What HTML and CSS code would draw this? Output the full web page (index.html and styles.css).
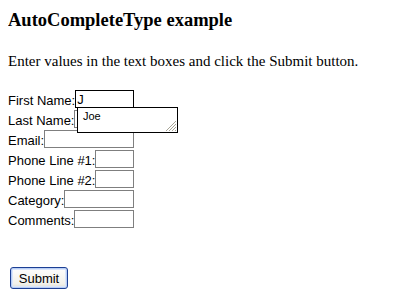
FILE: index.html
```html
<!DOCTYPE html>
<html lang="en">
<head>
    <meta charset="UTF-8">
    <title>AutoCompleteType example</title>
    <link rel="stylesheet" href="styles.css">
</head>
<body>
    <h3>AutoCompleteType example</h3>

    <p>Enter values in the text boxes and click the Submit button.</p>

    <form class="entry-form" onsubmit="return false;">
        <div class="row">
            <label for="firstName">First Name:</label>
            <input type="text" id="firstName" class="focused" value="J">
            <div class="suggest">
                <div class="suggest-item">Joe</div>
                <svg class="grip" width="12" height="12" viewBox="0 0 12 12">
                    <path d="M11 1 L1 11 M11 4 L4 11 M11 7 L7 11 M11 10 L10 11" stroke="#a8a597" stroke-width="1"/>
                    <path d="M12 2 L2 12 M12 5 L5 12 M12 8 L8 12" stroke="#ffffff" stroke-width="1"/>
                </svg>
            </div>
        </div>
        <div class="row">
            <label for="lastName">Last Name:</label>
            <input type="text" id="lastName">
        </div>
        <div class="row">
            <label for="email">Email:</label>
            <input type="text" id="email">
        </div>
        <div class="row">
            <label for="phone1">Phone Line #1:</label>
            <input type="text" id="phone1">
        </div>
        <div class="row">
            <label for="phone2">Phone Line #2:</label>
            <input type="text" id="phone2">
        </div>
        <div class="row">
            <label for="category">Category:</label>
            <input type="text" id="category">
        </div>
        <div class="row">
            <label for="comments">Comments:</label>
            <input type="text" id="comments">
        </div>

        <button type="submit" class="submit-btn">Submit</button>
    </form>
</body>
</html>
```

FILE: styles.css
```css
body {
    margin: 8px;
    background: white;
    color: black;
    font-family: "Liberation Serif", "Times New Roman", serif;
    font-size: 15px;
}
h3 {
    font-size: 18.5px;
    font-weight: bold;
    margin: 2px 0 0;
}
p {
    margin: 22px 0 0;
}
.entry-form {
    font-family: "Liberation Sans", Arial, sans-serif;
    font-size: 13px;
    padding-top: 19px;
}
.row {
    position: relative;
    display: flex;
    align-items: flex-end;
    width: 126px;
    height: 20px;
}
.row:first-child {
    z-index: 2;
}
.row label {
    line-height: 16px;
    white-space: nowrap;
}
.row input {
    flex: 1;
    width: 0;
    height: 18px;
    margin: 0 0 1px;
    padding: 0 1px;
    box-sizing: border-box;
    border: 1px solid #7f7f7f;
    font-family: "Liberation Sans", Arial, sans-serif;
    font-size: 13px;
    outline: none;
}
.row input.focused {
    border-color: #000;
}
.suggest {
    position: absolute;
    left: 69px;
    top: 18px;
    width: 101px;
    height: 26px;
    box-sizing: border-box;
    border: 1px solid #000;
    background: white;
}
.suggest-item {
    font-family: "Liberation Sans", Arial, sans-serif;
    font-size: 11px;
    padding: 2px 5px;
}
.grip {
    position: absolute;
    right: 0;
    bottom: 0;
}
.submit-btn {
    display: block;
    margin-top: 38px;
    margin-left: 2px;
    width: 58px;
    height: 22px;
    padding: 0;
    border: 1px solid #1c3f94;
    border-radius: 3px;
    background: linear-gradient(#fefefe, #f1f0ea 80%, #dcdad0);
    box-shadow: inset 0 0 0 1px #b7cdf5, inset 0 0 0 2px #dbe6fa;
    font-family: "Liberation Sans", Arial, sans-serif;
    font-size: 13px;
    color: black;
    cursor: pointer;
}
```
